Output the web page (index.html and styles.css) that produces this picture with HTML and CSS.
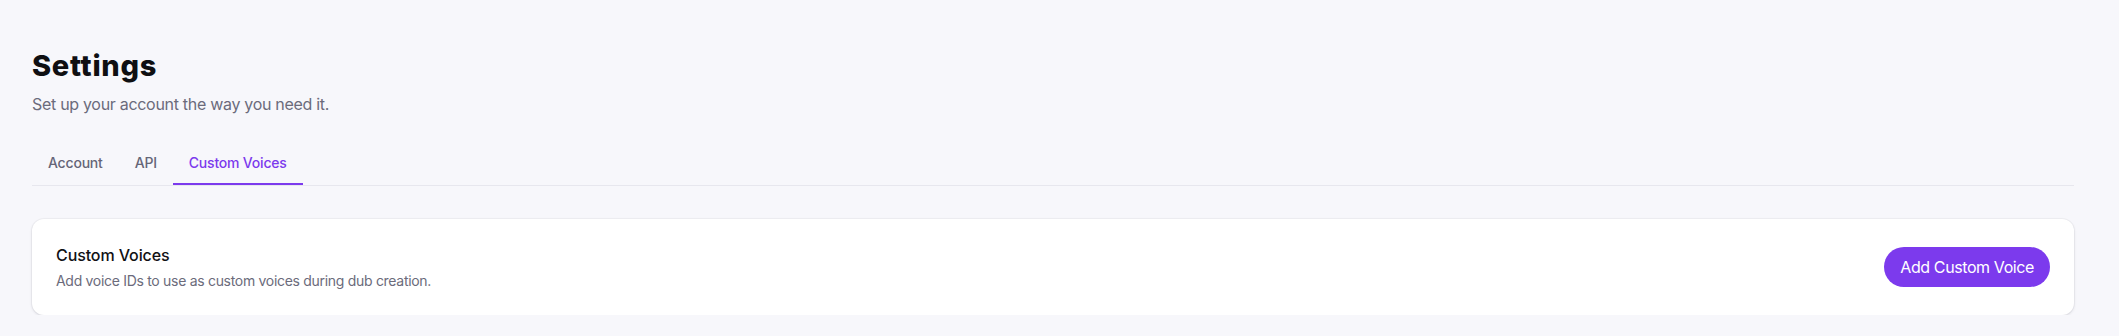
FILE: index.html
```html
<!DOCTYPE html>
<html lang="en">
<head>
<meta charset="utf-8">
<title>Settings</title>
<link rel="stylesheet" href="styles.css">
</head>
<body>
<main class="page">
  <header class="page-header">
    <h1 class="title">Settings</h1>
    <p class="subtitle">Set up your account the way you need it.</p>
  </header>
  <nav class="tabs">
    <a class="tab">Account</a>
    <a class="tab">API</a>
    <a class="tab tab-active">Custom Voices</a>
  </nav>
  <section class="card">
    <div class="card-text">
      <h2 class="card-title">Custom Voices</h2>
      <p class="card-desc">Add voice IDs to use as custom voices during dub creation.</p>
    </div>
    <button class="btn-primary">Add Custom Voice</button>
  </section>
</main>
</body>
</html>
```

FILE: styles.css
```css
* { box-sizing: border-box; }
html, body {
  margin: 0;
  background: #f7f7fb;
  font-family: Inter, "Noto Sans", "Liberation Sans", sans-serif;
  color: #111114;
}
.page {
  padding: 48px 45px 0 32px;
}
.title {
  margin: 0;
  font-size: 29px;
  line-height: 36px;
  font-weight: 800;
  letter-spacing: 0.7px;
  color: #0f0f12;
}
.subtitle {
  margin: 8px 0 0;
  font-size: 16px;
  line-height: 24px;
  letter-spacing: -0.3px;
  color: #6b6b7b;
}
.tabs {
  display: flex;
  margin-top: 25px;
  border-bottom: 1px solid #e7e7ee;
}
.tab {
  padding: 12px 16px 10px;
  border-bottom: 2px solid transparent;
  font-size: 14px;
  line-height: 20px;
  font-weight: 500;
  letter-spacing: -0.2px;
  color: #656577;
  cursor: pointer;
}
.tab-active {
  color: #7c3aed;
  border-bottom-color: #7c3aed;
}
.card {
  margin-top: 33px;
  display: flex;
  align-items: center;
  justify-content: space-between;
  background: #fff;
  border-radius: 12px;
  padding: 24px;
  box-shadow: 0 1px 3px rgba(20, 20, 40, 0.12), 0 0 0 1px rgba(20, 20, 40, 0.03);
}
.card-title {
  margin: 0;
  font-size: 16px;
  line-height: 24px;
  font-weight: 500;
  letter-spacing: -0.1px;
  color: #111114;
}
.card-desc {
  margin: 4px 0 0;
  font-size: 14px;
  line-height: 20px;
  letter-spacing: -0.3px;
  color: #6b6b7b;
}
.btn-primary {
  height: 40px;
  padding: 0 16px;
  border: none;
  border-radius: 9999px;
  background: #7c3aed;
  color: #fff;
  font-family: inherit;
  font-size: 16px;
  font-weight: 400;
  letter-spacing: -0.4px;
  cursor: pointer;
}
```
